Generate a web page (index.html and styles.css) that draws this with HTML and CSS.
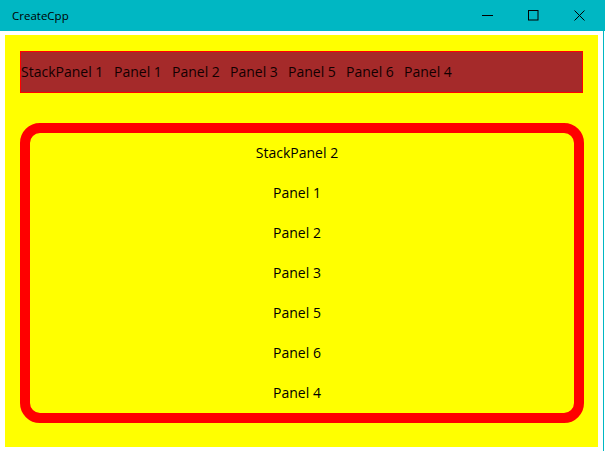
FILE: index.html
```html
<!DOCTYPE html>
<html>
<head>
<meta charset="utf-8">
<title>CreateCpp</title>
<link rel="stylesheet" href="styles.css">
</head>
<body>
<div class="window">
  <div class="titlebar">
    <span class="title">CreateCpp</span>
    <div class="caption-buttons">
      <span class="cap-btn">
        <svg width="11" height="11" viewBox="0 0 11 11"><line x1="0" y1="5.5" x2="11" y2="5.5" stroke="#000" stroke-width="1"/></svg>
      </span>
      <span class="cap-btn">
        <svg width="11" height="11" viewBox="0 0 11 11"><rect x="0.5" y="0.5" width="9.5" height="9.5" fill="none" stroke="#000" stroke-width="1"/></svg>
      </span>
      <span class="cap-btn">
        <svg width="11" height="11" viewBox="0 0 11 11"><path d="M0.5 0.5 L10.5 10.5 M10.5 0.5 L0.5 10.5" stroke="#000" stroke-width="1" fill="none"/></svg>
      </span>
    </div>
  </div>
  <div class="frame">
    <div class="client">
      <div class="canvas">
        <div class="hstack">
          <span class="h-item h-first">StackPanel 1</span>
          <span class="h-item">Panel 1</span>
          <span class="h-item">Panel 2</span>
          <span class="h-item">Panel 3</span>
          <span class="h-item">Panel 5</span>
          <span class="h-item">Panel 6</span>
          <span class="h-item">Panel 4</span>
        </div>
        <div class="vstack">
          <div class="v-item">StackPanel 2</div>
          <div class="v-item">Panel 1</div>
          <div class="v-item">Panel 2</div>
          <div class="v-item">Panel 3</div>
          <div class="v-item">Panel 5</div>
          <div class="v-item">Panel 6</div>
          <div class="v-item">Panel 4</div>
        </div>
      </div>
    </div>
  </div>
</div>
</body>
</html>
```
FILE: styles.css
```css
html, body {
  margin: 0;
  padding: 0;
  background: #ffffff;
}
body {
  width: 605px;
  height: 451px;
  overflow: hidden;
  font-family: "Open Sans", "Noto Sans", sans-serif;
  color: #000;
}
.window {
  display: flex;
  flex-direction: column;
  width: 605px;
  height: 451px;
}
.titlebar {
  height: 31px;
  background: #00b7c3;
  display: flex;
  align-items: center;
  justify-content: space-between;
  flex-shrink: 0;
}
.title {
  font-size: 11.5px;
  margin-left: 12px;
  margin-top: -1px;
}
.caption-buttons {
  display: flex;
  align-items: center;
  margin-right: 20px;
  gap: 35px;
  margin-top: -1px;
}
.cap-btn {
  display: flex;
  width: 11px;
  height: 11px;
}
.frame {
  flex: 1;
  display: flex;
}
.client {
  flex: 1;
  padding: 4px 5px 4px 5px;
  border-right: 1px solid #00b7c3;
  margin-right: 1px;
  background: #fff;
}
.canvas {
  background: #ffff00;
  height: 412px;
  padding: 16px 0 0 15px;
  box-sizing: border-box;
}
.hstack {
  width: 563px;
  height: 42px;
  box-sizing: border-box;
  border: 1px solid #ff0000;
  background: #a52a2a;
  display: flex;
  align-items: center;
  font-size: 14px;
  line-height: 40px;
  color: #120000;
}
.h-item {
  width: 58px;
  white-space: nowrap;
  flex-shrink: 0;
}
.h-first {
  width: 93px;
}
.vstack {
  margin-top: 30px;
  width: 564px;
  height: 300px;
  box-sizing: border-box;
  border: 10px solid #ff0000;
  border-radius: 20px;
  padding-right: 10px;
  display: flex;
  flex-direction: column;
}
.v-item {
  height: 40px;
  line-height: 40px;
  text-align: center;
  font-size: 14px;
}
```
